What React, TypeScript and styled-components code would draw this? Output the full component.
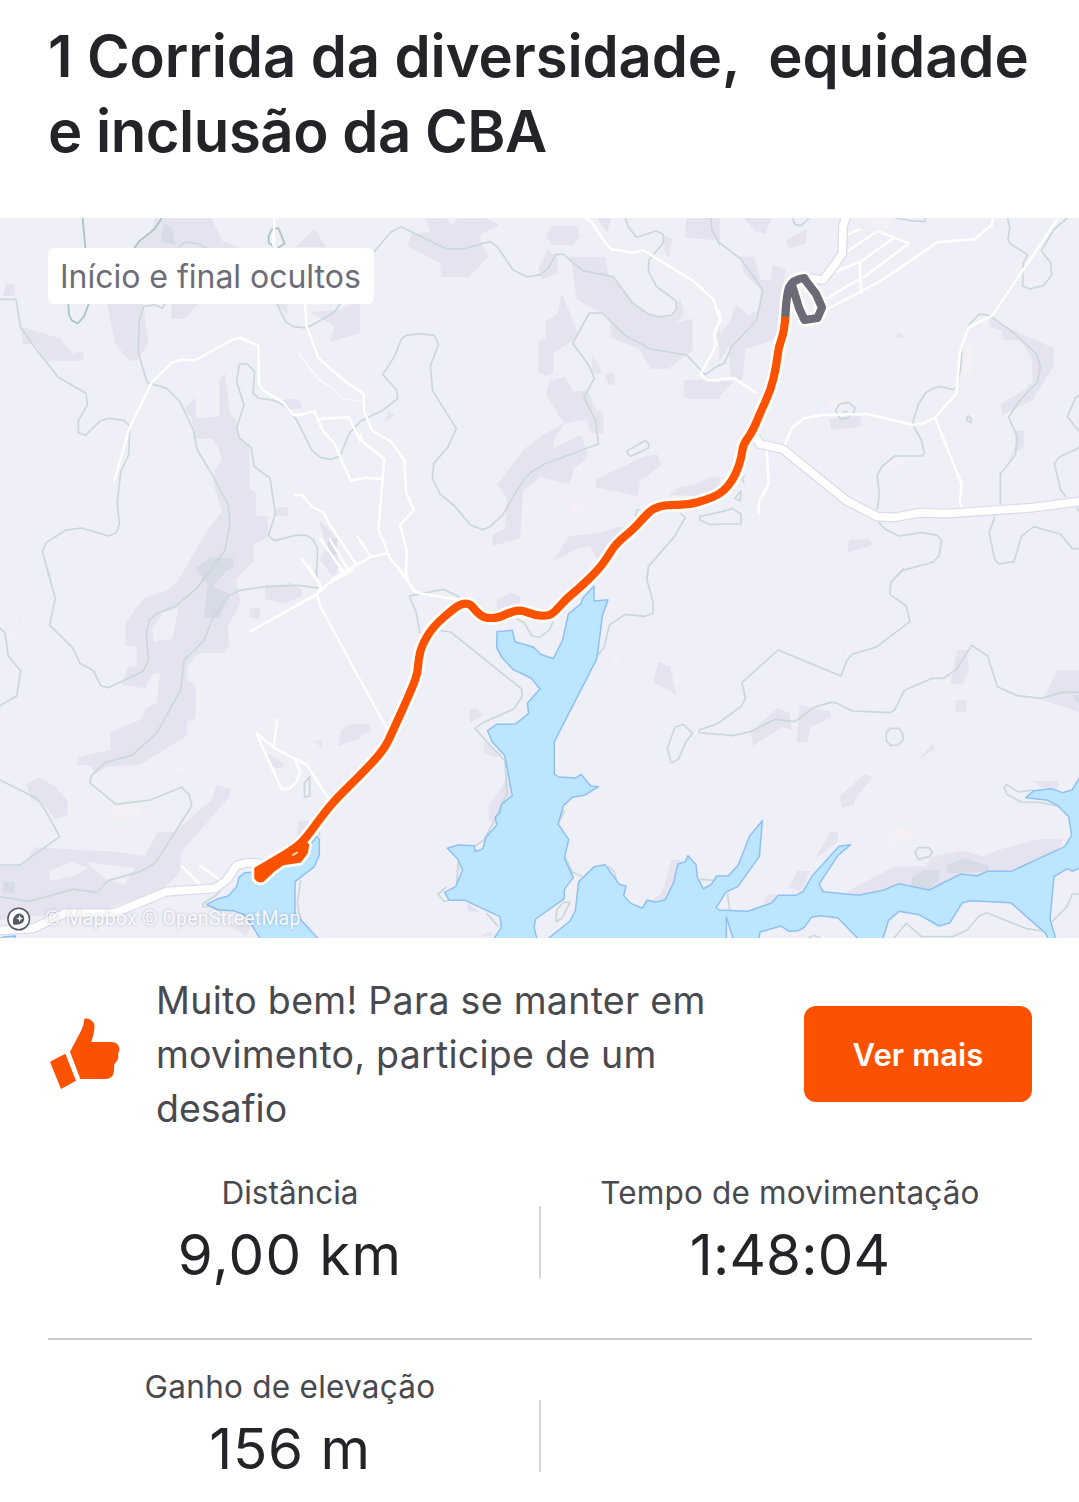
import React from "react";
import styled, { createGlobalStyle } from "styled-components";

const GlobalStyle = createGlobalStyle`
  * { box-sizing: border-box; }
  body { margin: 0; background: #fff; font-family: Inter, "Liberation Sans", sans-serif; }
`;

const Page = styled.main`
  width: 1079px;
  height: 1502px;
  overflow: hidden;
  display: flex;
  flex-direction: column;
  background: #fff;
  color: #242428;
`;

const Title = styled.h1`
  margin: 0;
  height: 218px;
  padding: 19px 0 0 48px;
  font-size: 58px;
  line-height: 75px;
  font-weight: 600;
`;

const Line = styled.span<{ $spacing: number }>`
  display: block;
  white-space: pre;
  letter-spacing: ${(p) => p.$spacing}px;
`;

const MapFrame = styled.section`
  position: relative;
  height: 720px;
  flex: none;
  overflow: hidden;
  background: #eeeff7;
`;

const MapDrawing = styled.svg`
  display: block;
  width: 1079px;
  height: 720px;
`;

const Chip = styled.div`
  position: absolute;
  left: 48px;
  top: 30px;
  width: 326px;
  height: 56px;
  padding-left: 12px;
  border-radius: 6px;
  background: #fff;
  color: #6d6d78;
  font-size: 32px;
  line-height: 57px;
  letter-spacing: -0.02px;
  white-space: nowrap;
`;

const Attribution = styled.div`
  position: absolute;
  left: 45px;
  bottom: 7px;
  font-family: Roboto, sans-serif;
  font-size: 19.5px;
  line-height: 24px;
  letter-spacing: 0.2px;
  color: rgba(255, 255, 255, 0.92);
  text-shadow: 0 0 3px rgba(90, 90, 120, 0.4);
  white-space: nowrap;
`;

const Promo = styled.section`
  display: flex;
  align-items: center;
  height: 232px;
  padding: 0 47px 0 48px;
  flex: none;
`;

const Thumb = styled.svg`
  width: 74px;
  height: 74px;
  flex: none;
`;

const Message = styled.p`
  margin: 2px 0 0 34px;
  flex: 1;
  font-size: 37.5px;
  line-height: 54px;
  color: #494950;
`;

const Button = styled.button`
  width: 228px;
  height: 96px;
  border: 0;
  border-radius: 12px;
  background: #fc5200;
  color: #fff;
  font-family: inherit;
  font-size: 31px;
  font-weight: 600;
  letter-spacing: 0.1px;
`;

const StatRow = styled.section<{ $first?: boolean }>`
  display: grid;
  grid-template-columns: 491px 2px 491px;
  height: ${(p) => (p.$first ? 168 : 162)}px;
  margin: 0 47px 0 48px;
  padding-top: ${(p) => (p.$first ? 0 : 24)}px;
  flex: none;
`;

const Rule = styled.hr`
  width: 984px;
  height: 2px;
  margin: 0 48px;
  border: 0;
  background: #c9cbca;
  flex: none;
`;

const Divider = styled.div`
  height: 72px;
  margin-top: 36px;
  background: #d6d6d9;
`;

const Stat = styled.div<{ $nudge: number }>`
  display: flex;
  flex-direction: column;
  align-items: center;
  padding-left: ${(p) => Math.max(0, p.$nudge)}px;
  padding-right: ${(p) => Math.max(0, -p.$nudge)}px;
`;

const Label = styled.div<{ $spacing: number }>`
  margin-top: 3px;
  font-size: 31.5px;
  line-height: 40px;
  color: #494950;
  letter-spacing: ${(p) => p.$spacing}px;
`;

const Value = styled.div<{ $spacing: number }>`
  margin-top: 7px;
  font-size: 56.5px;
  line-height: 70px;
  font-weight: 400;
  white-space: nowrap;
  letter-spacing: ${(p) => p.$spacing}px;
`;

/* The terrain is stored as survey sheets; every sheet has three units to a pixel. */
type Sheet = {
  x: number;
  y: number;
  hills: string;
  sand?: string;
  mist?: string;
  contours: string;
  strong?: string;
  water?: string;
  roads?: string;
  lanes?: string;
  main?: string;
};

const sheets: Sheet[] = [
  {
    x: 0,
    y: 210,
    hills:
      "M465 24H635L665 92L735 118H395L450 75ZM885 112L943 58L980 112ZM18 222H44V258H8ZM62 350L180 385L218 430L250 422V452H135L105 402H68ZM322 282H430L445 400L412 452H388L345 400ZM515 280H595L555 326H515ZM825 280H862V315ZM930 305L1020 300L1080 268V370L990 395L1005 350ZM658 510L675 490L690 612L710 630L720 690L748 710V835L768 850V918H803V980L760 1005V1055L705 1110H535L570 1050L610 980L665 905L643 830L645 780L665 750L655 710L635 686H586L575 625L552 598L587 560V625L658 618ZM850 568H895L908 592L860 600ZM830 892H863V917H825ZM956 928L1000 970L1020 1070L1000 1100L958 1050L980 1010Z",
    mist: "M492 38L515 55L527 105L482 95ZM588 1075L628 1044H700V1070L665 1095L610 1110ZM985 985H1012L1010 1035H982Z",
    contours:
      "M0 268H48L62 352L110 420L175 502L258 550L262 585L235 632V668L257 676L300 633L325 625L372 631L390 650L386 735L362 785L352 880L358 942L350 967L326 978L245 954L198 960L138 998L127 1025L152 1112M495 280L487 295L465 284L430 290L418 335L414 425L441 517L500 535L540 575L580 660L592 720L640 800L685 885L690 940L675 1022L605 1112M535 112L555 96L590 100L630 118M1020 282L1002 308L920 354L880 350L857 335L830 280M718 462H742L764 485L759 550L775 564L825 572L855 588L890 630L935 720L962 743L995 748L1020 738L1048 670L1080 635M718 462L710 515L732 585L710 655L718 684L753 712L763 770L810 804L826 912L805 977L824 992L885 976L920 976L938 988L953 1015L949 1112",
    strong: "M248 24L256 114M486 24L463 58L416 95L402 116M205 282L207 315L216 332L233 340L252 320L266 282M815 58L835 54L854 101L829 116L806 98V78Z",
    roads:
      "M824 24L820 105L911 230L920 350L956 445L1040 518L1082 545M342 815L390 650L455 518L515 458L540 450H588L695 390L720 384L775 406L777 520L790 542L848 576L880 615H900L943 603L970 665L1003 700L1052 812L1080 806M958 627L1046 621L1082 695M883 855H908L935 890L970 908L990 945L1072 1068M960 985L1034 1092M988 985L1045 1080M904 1046L955 1115M992 1112L1080 1058M1070 978L1080 990",
    lanes: "M893 428L960 512L996 532L1027 565L1080 575",
  },
  {
    x: 360,
    y: 210,
    hills:
      "M195 24H260L272 48L295 24H380L418 46L362 72V98L385 140L328 201H246L238 158L141 108L155 70L212 66ZM572 48H650L661 82L637 106H577L558 82ZM712 24H752L742 68ZM912 75L938 88L925 145L910 118ZM980 24H1080V92L975 82ZM563 118L592 142V190L546 208L535 178ZM632 140H735L745 192L770 210L818 280L860 310L935 325L960 262L972 312L950 338L998 326V420L925 476H872L835 415L755 385L748 325L650 268ZM605 250L637 325L655 380L580 430V490L558 498L535 488V395L557 383V335L592 312ZM697 435L729 490H696ZM733 490H764V524H746ZM972 510H1080V568H990L972 558ZM1080 345L1070 378L1080 405ZM568 512L615 500L640 545L680 540L710 602L730 605V670H695L680 630L655 632L615 640L580 690L580 715L650 680L665 675L684 742L642 775L630 822L542 802L490 840L480 985L397 1008V975L435 955L440 860L410 825L495 715L550 675L612 640L557 555ZM708 808L850 740L892 732L904 765L840 815L832 858L708 832ZM925 855L958 832L1005 825L1045 802H1078V860ZM578 1056L625 978L715 970L775 950L820 958L715 1055L690 1008L645 1018ZM75 635L85 605L104 616Z",
    sand: "M637 880H674L672 905L630 912Z",
    contours:
      "M42 126L92 67L123 50L260 117H310L390 94L413 112L459 180L503 201L542 194L565 174L588 133H610L668 182L760 200L817 278L865 312L900 321L934 316L949 297V273L890 230L865 184L867 150L910 98V73L888 63L830 82L805 50L795 24M0 634L65 603L113 566L110 540L68 494L103 440L124 388L137 377L180 371L223 376L236 402L211 468L218 542L289 656L263 712L221 760L217 805L240 852L284 888L331 944L368 959L390 950L427 916L490 810L515 785L555 761L640 730L715 702L708 635L672 562L703 505L688 468L638 400L688 309H727L795 376L872 417L980 435L1036 494L1080 463M802 722L855 692L866 700V714L812 739L802 730ZM1080 906L1020 920V930L1048 943H1080M960 910L976 922L943 980L865 1070L860 1112M827 920L830 902L838 898M1052 24L1056 60L1080 105",
    roads:
      "M675 24L695 35L730 90L753 118L820 128L848 120L998 211L1060 268L1080 330L1062 375L1068 405L1022 494L1042 511H1080M0 543L12 555V605L38 663L92 694L133 750L138 845L162 900L120 945L140 1020L138 1110M0 670L10 697L73 747L55 956L90 1045L148 1112M0 806L16 803L68 807M0 990L32 1040L84 1030M0 1060L32 1040",
    lanes: "M0 574L12 575",
  },
  {
    x: 719,
    y: 210,
    hills:
      "M75 24H157L140 72L112 66ZM200 90L265 58L260 100L210 118ZM62 140H105L125 210L155 210L162 165L200 178L190 240L197 350L160 390L80 418L70 510L35 508L30 410L0 455V375L35 330L48 283L90 315L120 300L125 240L75 190ZM0 515L45 512L0 560ZM535 365L558 382L535 384ZM330 626L427 618L425 650L338 660ZM390 990L450 988L461 1005L385 1028ZM810 315L850 345L1004 415V470L940 570L850 617L845 583L915 540L940 515V450L905 392L855 390L848 362L812 350ZM885 662H915V710L890 725L862 765L890 705Z",
    sand: "M448 24H515V58L445 50ZM742 398H762L755 508L728 490ZM330 568L380 560V595L330 600ZM500 745L555 742V765L510 778Z",
    contours:
      "M220 24L228 43L247 47L270 24M530 24L575 32L618 35V24M0 97L65 147L132 240L113 330L38 410L17 458L0 468M866 24L872 55L867 90L875 102L926 134L913 160L911 228L933 237L975 226L998 195L995 158L967 122L1005 58L1045 24M748 348L780 312L812 316L882 367L953 432L964 470L956 515L905 568L869 622L895 680L889 735L844 792V882M828 920L810 968L827 1048L839 1062L885 1055L908 978L944 950L1024 972L1060 1016H1080M1080 556L1070 563L1045 620L1080 663M1080 710L1072 718L1022 740L1006 760L1025 840L1042 862M1072 892L1080 905M748 352L730 410L725 475L712 532L702 539L665 530L645 534L619 549L597 585L580 642L607 690L616 730L610 738H528L490 768L475 795L481 852L475 900M480 938L500 958L538 978L608 968L655 976L668 992L660 1038L642 1056L550 1082L520 1112M350 603L360 583L388 577L408 592L405 606L390 622L364 627ZM370 608L385 604M743 630L747 617L758 628L757 638ZM0 907L40 896L66 912V942H0M66 843L48 865L64 872ZM77 797L70 808L76 820",
    roads:
      "M821 24L819 45L766 88L655 97L485 213L325 297M379 128L475 63L570 100L440 198L390 225L325 265M350 185L425 155L530 80M422 155L426 252M380 76L425 56M1018 24L820 316L748 353L722 430L712 550L648 623L612 640L585 645L442 612L310 615L255 625L218 654L196 708M648 623L728 823L722 878L732 895M143 715L149 822L120 875L119 913M0 508L45 505L115 550M0 300L5 330L0 342",
    main: "M383 14L372 48L370 130L350 160L312 210L270 205M110 682L122 702L192 718L380 870L475 920L528 922L602 908L680 911L940 893L1085 874",
  },
  {
    x: 0,
    y: 570,
    hills:
      "M575 0H720L705 22L722 100L682 170L690 225L672 250H595L560 290L562 330L587 345V445L562 455V495L420 585L320 590L285 612L272 585H230V562L332 540V485L420 450L438 415L470 400L480 310L460 310L435 355L363 345L385 290L410 288V228H376V160L430 85L500 62ZM795 52L870 38L908 60L900 82L850 100L795 88ZM748 115H782L778 147L748 140ZM78 642L115 622L165 650L203 692L202 738L165 748L130 700L95 690ZM1080 460L1045 465L1022 485L1015 528L1080 505ZM940 512H968V535ZM795 545L850 580V596L810 590ZM105 832L350 845L435 858L470 788L525 785L635 690L650 645L692 656L690 678L545 845L538 910L480 965L300 1020L0 1050V885H70ZM895 752H925L950 790L885 835ZM680 1060L750 1065L740 1100Z",
    sand: "M30 185L50 182V205L25 220ZM72 142L84 172L65 168ZM335 708L420 702L425 730L342 752ZM530 588L558 600L528 612Z",
    mist: "M590 0H680L640 50L690 72L660 140L612 146L622 40ZM10 936H44V968H10Z",
    contours:
      "M142 0L166 85L149 165L218 233L240 280L280 302L303 348L325 353L430 303L445 270L439 190L448 150L470 130L525 110L590 55L635 0M960 55L900 46L800 49L715 62L684 80L637 147L612 212L552 270L542 360L470 490L395 556L315 578L275 616L269 638L348 703L452 690L545 652L568 674L575 708L465 880L420 905L325 932L290 967L220 958L85 994L0 980M0 175L15 188L25 258L62 303L50 378L0 407M0 630L110 685L130 710L179 800L60 885H0M913 640L929 620V678L914 682ZM948 0L952 28M690 925L650 975L610 1000L608 1010L650 1010M902 930L892 1000L903 1055M960 785L955 800",
    water: "M950 800L958 808V855L943 890L885 935V1032L903 1050L960 1112H785L735 1035L700 1022L655 1020L620 1003L650 988L685 978L710 950L717 922L735 908L780 905L900 865ZM-8 1108L15 1100L46 1098V1112H-8Z",
    roads:
      "M750 185L950 73L985 40L1060 0M925 -15L963 50L950 75L962 110L1080 330M832 447L821 530M768 488L825 535L885 567L920 583L988 690M768 488L845 658L870 655L890 635L900 605L885 568M545 888L600 944M598 886L658 928M1015 -5L1030 10",
    main: "M-10 1082L100 1075L195 1030H340L500 965L645 955L680 930L710 887L740 878L800 882",
  },
  {
    x: 360,
    y: 570,
    hills:
      "M410 90L455 68L480 80V105L410 118ZM328 420L348 413L370 436L330 458ZM0 462L30 464L35 482L0 500ZM372 515L430 555L405 562L372 548ZM385 705L430 645L445 600L455 680L400 755H386ZM895 275L930 290L950 375L880 335ZM935 870L965 868L950 930L920 998H862L905 970ZM322 1000L360 1025H325ZM360 1100L382 1085L410 1095ZM285 910L296 880L310 895Z",
    sand: "M615 730H628V772H605ZM765 242L777 280L757 296Z",
    contours:
      "M148 78L250 58L300 82M148 78L168 125L180 190M242 182L272 186L485 357L487 378L462 417L365 460L345 475L385 520L435 573L441 670L400 757L372 810L345 828M470 146L492 158L516 198L540 202L568 180L580 155M865 0L860 28L880 98L879 130L855 139L795 133L748 166L732 232L715 255M945 472L970 463L998 490L978 515L955 568L933 578L922 535ZM1080 455L1065 464L1017 480L1018 488L1080 494M588 1055L590 1020L610 997H630L606 1045ZM260 950L234 973L252 994L268 990M295 875L290 950M615 720L595 760M615 860L638 907L665 918M745 888L762 905L770 930M1020 928L1060 931M380 1030L415 1070",
    water:
      "M411 185L457 181L465 215L520 231L542 253L580 266L608 210L625 132L664 100L668 85L702 48V93L744 89L727 138L711 265L583 515V612L596 621L647 624L663 613L692 648L716 650L673 676L637 682L611 706L594 762L626 808L613 866L640 922L613 958V986L527 1047L522 1070L532 1112H398L424 1072L420 1040L315 991H268L254 967L287 950L308 900L293 867L262 835L295 825L343 827L345 845L369 836L377 803L410 765L406 742L420 728L424 703L457 677L434 556L397 517L383 482L410 463H465L506 430L502 400L540 357L513 324L460 299L424 260L410 232Z",
    roads: "M115 -5L165 65L190 72L300 90M135 -10L142 22M0 328L80 475",
  },
  {
    x: 719,
    y: 570,
    hills:
      "M95 485L175 415L212 428L218 480L190 470L102 528ZM242 405L335 425V442L275 472L265 516H232ZM715 240H745L750 300L732 343H694ZM712 390H742V426L708 424ZM1016 300H1080V426L970 390ZM640 522L648 535L595 573ZM435 612L461 622L412 680L405 705L370 714L360 682ZM335 785L357 787V815L288 866ZM235 902L275 903L245 965L210 950ZM150 970L180 976L160 997L132 1002ZM945 633H1020L1015 660L970 655ZM382 965L525 890L620 888L635 860L735 843L795 860L835 840L960 808L1030 806L1020 845L870 910L720 925L630 960L540 950L400 980Z",
    sand: "M383 228H418V250L385 256ZM508 795L550 770L585 785L580 800L510 830Z",
    mist: "M682 885L735 865L810 888L805 905L685 910ZM580 922L612 900H660V930L625 960L575 945ZM1065 375H1080V400L1068 390Z",
    contours:
      "M555 -5L515 38L513 73L562 108L573 155L470 232L400 252L383 272L366 318L177 240L69 338L79 384L68 408L0 458M0 492L42 497L95 485L168 448L228 455L285 412L335 397L352 399L400 423L515 428L528 418L556 361L640 325L675 324L712 298L758 226L806 258L835 350L895 377L967 385L1030 367H1080M514 475H540L550 488L553 509L538 525L515 526L502 512V488ZM588 848L597 833H630L641 847L630 860L598 868ZM945 660L898 666L862 643L856 655L863 672L906 696L968 698L1012 708M1080 972H1060L1045 1008L1000 1055M520 1110L562 1060L608 1100H700L745 1080L780 1038L803 1028L920 1075L968 1083M25 970L32 1020M268 1104L285 1096L305 1104",
    water:
      "M-520 1112L-447 1053L-431 1022L-421 935L-374 890L-342 884L-299 943L-279 949L-286 977L-265 1000L-230 1014L-215 990L-191 997L-161 989L-137 940L-123 882L-101 875L-93 857L-69 884L-65 922L-47 957L-22 942L-7 918L28 917L58 885L92 798L130 752L121 860L56 950L20 967L0 1000L-9 1012L0 1020L86 1024L158 999L178 976H230L252 965L280 917L360 829L395 824L357 856L300 943L313 965L420 976L495 960L540 941L630 960L725 912L773 918L805 904H877L1037 830L1058 796L1049 740L1015 706L983 690L920 683L945 662L997 656L1030 668L1059 660L1080 626L1095 600V888L1060 904L1045 896L1005 920L993 1047L1012 1112H990L980 1090L875 998L755 992L730 998L693 1058L660 1068L600 1034L540 1024L508 1052L490 1112H423L357 1044L305 1037L277 1042L256 1072L238 1082L210 1084L186 1068L123 1086L119 1112H44L22 1040V1112Z",
  },
];

const LayerGroup = ({
  draw,
}: {
  draw: (s: Sheet) => React.ReactNode;
}) => (
  <>
    {sheets.map((s) => (
      <g key={`${s.x}-${s.y}`} transform={`translate(${s.x} ${s.y}) scale(0.33333)`}>
        {draw(s)}
      </g>
    ))}
  </>
);

type Point = [number, number];

const smooth = (pts: Point[]) => {
  let d = `M${pts[0][0]} ${pts[0][1]}`;
  for (let i = 1; i < pts.length - 1; i++) {
    const mx = (pts[i][0] + pts[i + 1][0]) / 2;
    const my = (pts[i][1] + pts[i + 1][1]) / 2;
    d += `Q${pts[i][0]} ${pts[i][1]} ${mx} ${my}`;
  }
  const last = pts[pts.length - 1];
  return `${d}L${last[0]} ${last[1]}`;
};

const route = smooth([
  [785.3, 316.7], [784.3, 331.7], [778.5, 346.7], [776.3, 366.7], [770.7, 390], [760.7, 411.7],
  [752.3, 432], [743, 444.5], [741.7, 456.7], [736.3, 473.3], [728.5, 486], [719, 494.5],
  [706.7, 499.5], [688.3, 505], [666.7, 504.8], [653.3, 508], [643.3, 518], [633.3, 529.3],
  [616, 543.5], [606.7, 558.3], [598, 570], [580, 587.5], [566.5, 598.5], [553, 613.8],
  [546, 616], [535, 615.3], [520, 609.5], [507, 613.5], [498.3, 618], [484, 618], [476, 611.5],
  [470.5, 604], [463, 603.5], [455, 607.5], [433, 626.5], [422, 645], [418.5, 659], [417.5, 674],
  [410, 693], [393.5, 729.5], [384, 750], [360, 775.5], [333.3, 801.5], [316.5, 823.5],
  [306, 838], [297, 846.5],
]);

const finish =
  "M255.500 868.500L285 851L303 839L308 845L306.500 853L300 861.500L283 864L273 871L263 880.500Q258 882.500 255.500 878Z";
const hiddenLoop =
  "M785.4 316.500Q786 298 789 287.500Q793 279 804.500 278L806 281L816 294L822 307.500L817.500 318L804.500 320L799 308L792 285";

const TerrainMap = () => (
  <MapDrawing viewBox="0 218 1079 720" aria-hidden="true">
    <LayerGroup
      draw={(s) => (
        <>
          <path d={s.hills} fill="#e5e3ef" />
          {s.sand && <path d={s.sand} fill="#f5f0f5" />}
          {s.mist && <path d={s.mist} fill="#d6dbe6" />}
        </>
      )}
    />
    {/* Clearings between the western slopes */}
    <path
      d="M163 613L179 607L172 639L154 642L152 629ZM51 870L72 862L88 868L72 877L49 881ZM86 862L135 868L124 885L104 878Z"
      fill="#eeeff7"
    />
    <LayerGroup
      draw={(s) => (
        <>
          <path d={s.contours} fill="none" stroke="#cbd8da" strokeWidth="5" strokeLinejoin="round" />
          {s.strong && <path d={s.strong} fill="none" stroke="#adc6c4" strokeWidth="5.5" strokeLinejoin="round" />}
        </>
      )}
    />
    <LayerGroup
      draw={(s) =>
        s.water && (
          <path d={s.water} fill="#bce6ff" stroke="#8fc0f3" strokeWidth="4.5" strokeLinejoin="round" />
        )
      }
    />
    <LayerGroup
      draw={(s) => (
        <>
          {s.lanes && <path d={s.lanes} fill="none" stroke="#fff" strokeWidth="4" opacity="0.8" />}
          {s.roads && <path d={s.roads} fill="none" stroke="#fff" strokeWidth="7.500" strokeLinejoin="round" />}
          {s.main && (
            <>
              <path d={s.main} fill="none" stroke="#d9daea" strokeWidth="30" strokeLinejoin="round" />
              <path d={s.main} fill="none" stroke="#fff" strokeWidth="23" strokeLinejoin="round" />
            </>
          )}
        </>
      )}
    />
    <g fill="none" strokeLinejoin="round" strokeLinecap="round">
      <g stroke="#fffdf7" strokeWidth="13.500">
        <path d={route} />
        <path d={hiddenLoop} />
        <path d={finish} strokeWidth="8" />
      </g>
      <path d={route} stroke="#fc5200" strokeWidth="8.200" />
      <path d={hiddenLoop} stroke="#6b6b78" strokeWidth="8.200" strokeLinecap="butt" />
      <path d={finish} fill="#fc5200" stroke="#fc5200" strokeWidth="2.500" />
      <path d="M293 855L297 852.500" stroke="#ffd9bd" strokeWidth="2" />
    </g>
    <g transform="translate(18.700 919)">
      <circle r="10.800" fill="#fff" stroke="#555a66" strokeWidth="1.500" />
      <path d="M-5.500 5.500Q-6.800-1-3-4Q1-7 4.500-3.500Q7 .5 3.500 4Q0 6.500-5.500 5.500Z" fill="#555a66" />
      <path d="M1-4L2-1.500L4.500-.5L2 .5L1 3L0 .5L-2.500-.5L0-1.500Z" fill="#fff" />
    </g>
  </MapDrawing>
);

export default function App() {
  return (
    <>
      <GlobalStyle />
      <Page>
        <Title>
          <Line $spacing={-0.1}>{"1 Corrida da diversidade,  equidade"}</Line>
          <Line $spacing={-0.45}>e inclusão da CBA</Line>
        </Title>
        <MapFrame>
          <TerrainMap />
          <Chip>Início e final ocultos</Chip>
          <Attribution>© Mapbox © OpenStreetMap</Attribution>
        </MapFrame>
        <Promo>
          <Thumb viewBox="54 112 222 222" aria-hidden="true">
            <path
              fill="#fc5200"
              d="M60 246L106 222L138 303L93 328ZM120 216L154 152Q162 135 163 117Q184 115 193 134Q196 150 184 187H244Q266 188 268 207Q268 216 264 222Q268 240 256 249Q252 252 252 260V274Q249 298 226 298H151Z"
            />
          </Thumb>
          <Message>
            <Line $spacing={0.3}>Muito bem! Para se manter em</Line>
            <Line $spacing={0.25}>movimento, participe de um</Line>
            <Line $spacing={0}>desafio</Line>
          </Message>
          <Button>Ver mais</Button>
        </Promo>
        <StatRow $first>
          <Stat $nudge={-7}>
            <Label $spacing={0}>Distância</Label>
            <Value $spacing={1.2}>9,00 km</Value>
          </Stat>
          <Divider />
          <Stat $nudge={7}>
            <Label $spacing={0.15}>Tempo de movimentação</Label>
            <Value $spacing={0.2}>1:48:04</Value>
          </Stat>
        </StatRow>
        <Rule />
        <StatRow>
          <Stat $nudge={-7}>
            <Label $spacing={0.25}>Ganho de elevação</Label>
            <Value $spacing={0.8}>156 m</Value>
          </Stat>
          <Divider />
        </StatRow>
      </Page>
    </>
  );
}
